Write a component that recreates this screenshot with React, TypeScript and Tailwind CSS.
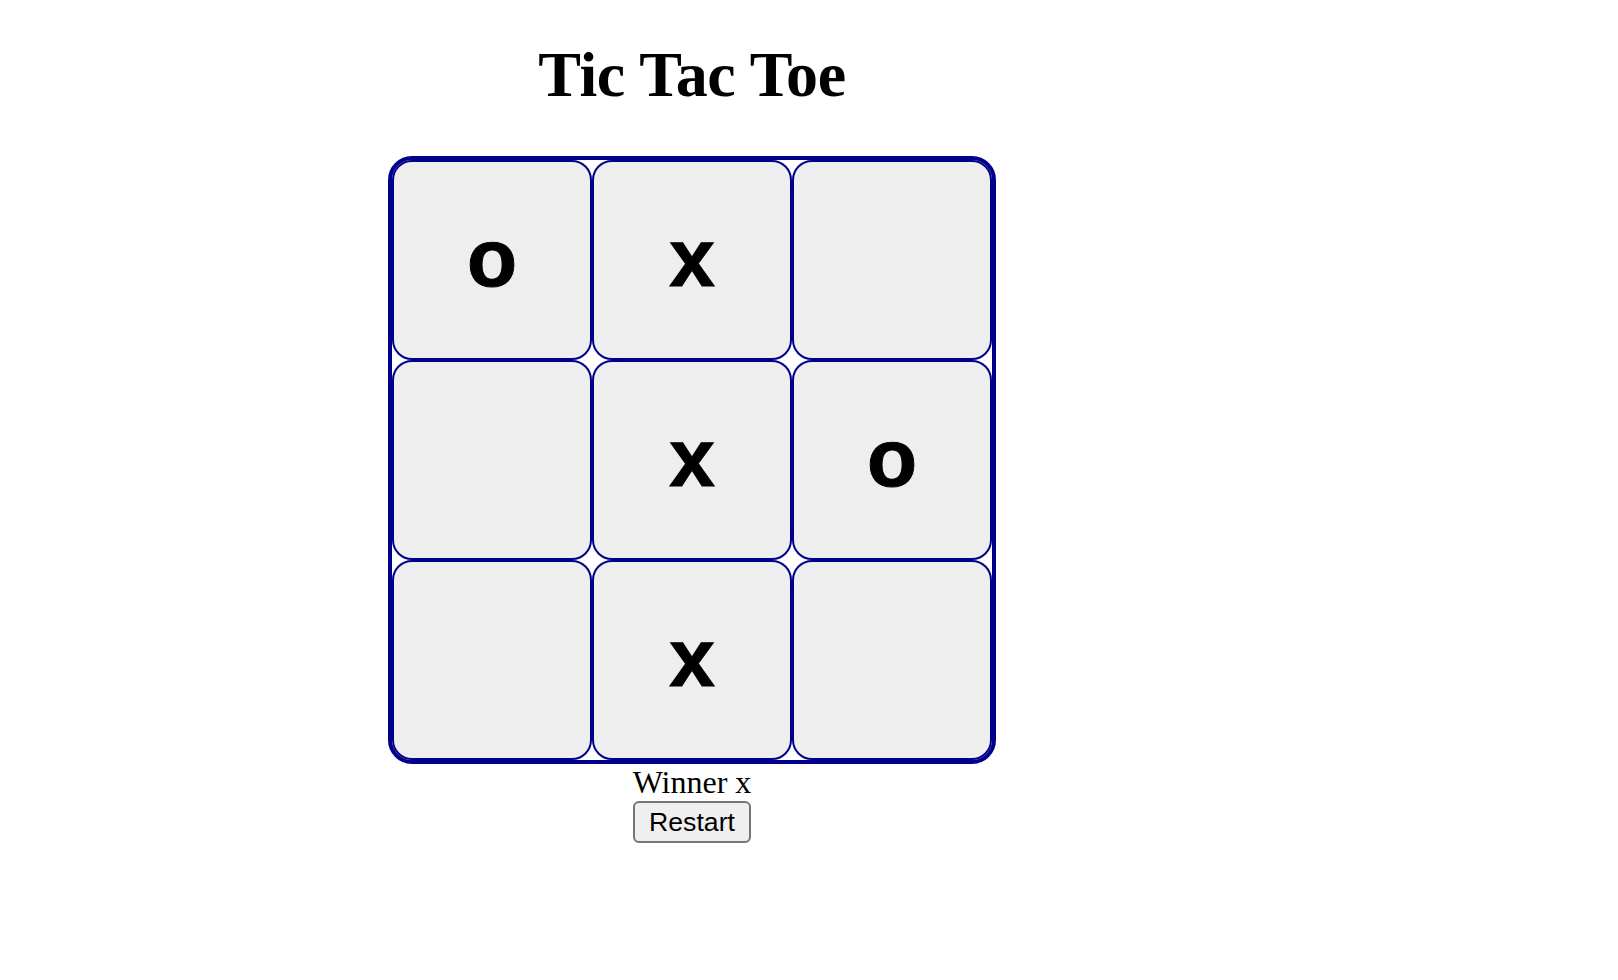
import { useState } from "react";

const START: (string | null)[] = ["o", "x", null, null, "x", "o", null, "x", null];

export default function App() {
  const [cells, setCells] = useState<(string | null)[]>(START);

  const restart = () => setCells(Array(9).fill(null));

  return (
    <div className="min-h-screen w-full bg-white">
      <div className="w-[1384px] flex flex-col items-center">
        <h1 className="mt-[38px] mb-[44px] text-[64px] leading-[74px] font-bold tracking-[-0.4px] text-black font-['Liberation_Serif',serif]">
          Tic Tac Toe
        </h1>

        {/* board */}
        <div className="grid grid-cols-3 border-4 border-[#00008b] rounded-[24px] bg-white">
          {cells.map((c, i) => (
            <div
              key={i}
              className="w-[200px] h-[200px] flex items-center justify-center pb-[5px] border-2 border-[#00008b] rounded-[20px] bg-[#eeeeee] text-[82px] font-bold text-black font-['Liberation_Sans',sans-serif] [-webkit-text-stroke:1px_black]"
            >
              {c}
            </div>
          ))}
        </div>

        <div className="text-[32px] leading-[37px] text-black font-['Liberation_Serif',serif]">
          Winner x
        </div>
        <button
          onClick={restart}
          className="w-[118px] h-[42px] flex items-center justify-center border-2 border-[#767676] rounded-[6px] bg-[#efefef] text-[26.67px] text-black font-['Liberation_Sans',sans-serif]"
        >
          Restart
        </button>
      </div>
    </div>
  );
}
